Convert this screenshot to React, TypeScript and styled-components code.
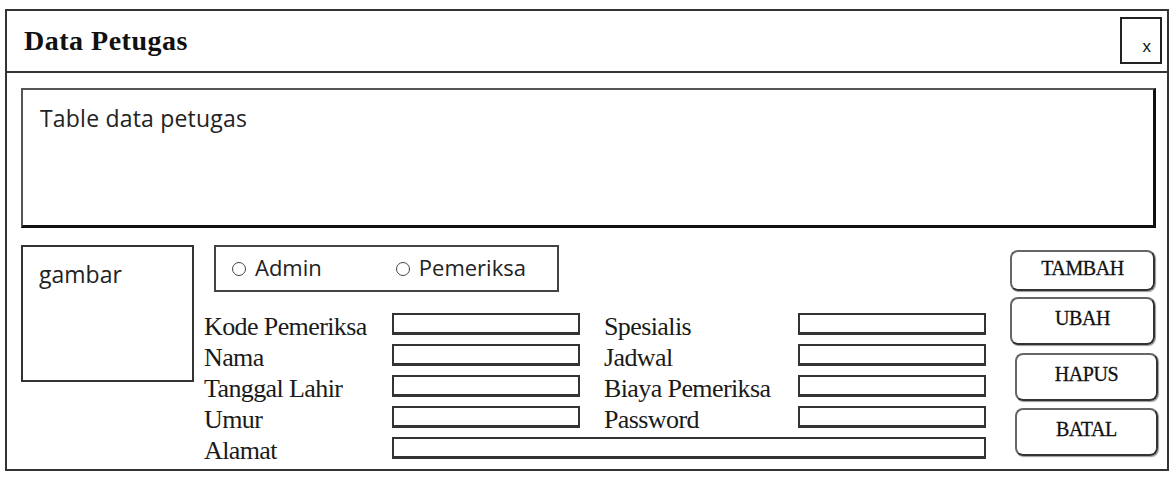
import { Fragment } from 'react';
import styled, { createGlobalStyle } from 'styled-components';

const GlobalStyle = createGlobalStyle`
    html, body {
        margin : 0;
        padding : 0;
        background-color : #ffffff;
    }
    body {
        font-family : "Liberation Serif", "Times New Roman", serif;
        color : #111;
    }
`;

const Frame = styled.div`
    margin : 9px 0 0 5px;
    width : 1164px;
    height : 462px;
    box-sizing : border-box;
    border : 2px solid #333;
    display : flex;
    flex-direction : column;
`;

const Header = styled.div`
    height : 62px;
    flex-shrink : 0;
    box-sizing : border-box;
    border-bottom : 2px solid #333;
    display : flex;
    justify-content : space-between;
    padding : 0 5px 0 17px;
`;

const Title = styled.h1`
    margin : 0;
    align-self : center;
    font-family : "Liberation Serif", serif;
    font-weight : bold;
    font-size : 28px;
    letter-spacing : 0.5px;
    color : #111;
`;

const CloseBox = styled.div`
    margin-top : 6px;
    width : 42px;
    height : 47px;
    box-sizing : border-box;
    border : 2px solid #222;
    display : flex;
    align-items : flex-end;
    justify-content : flex-end;
    padding : 0 9px 7px 0;
    font-family : "Liberation Sans", Arial, sans-serif;
    font-size : 17px;
    line-height : 1;
`;

const Body = styled.div`
    flex : 1;
    padding : 15px 11px 0 14px;
    display : flex;
    flex-direction : column;
    gap : 17px;
`;

const TableBox = styled.div`
    height : 140px;
    box-sizing : border-box;
    border : 2px solid #555;
    border-right : 3px solid #111;
    border-bottom : 3px solid #111;
    padding : 12px 0 0 17px;
    font-family : "Open Sans", "Noto Sans", sans-serif;
    font-size : 23px;
    letter-spacing : 0.2px;
    color : #222;
`;

const Bottom = styled.div`
    display : flex;
    align-items : flex-start;
`;

const ImageBox = styled.div`
    width : 173px;
    height : 137px;
    box-sizing : border-box;
    border : 2px solid #333;
    padding : 11px 0 0 16px;
    font-family : "Open Sans", "Noto Sans", sans-serif;
    font-size : 23px;
    color : #222;
`;

const FormArea = styled.div`
    margin-left : 10px;
    display : flex;
    flex-direction : column;
    gap : 16px;
`;

const RadioGroup = styled.div`
    margin-left : 10px;
    width : 345px;
    height : 47px;
    box-sizing : border-box;
    border : 2px solid #444;
    display : flex;
    align-items : center;
    padding : 0 0 3px 16px;
    gap : 74px;
    font-family : "Open Sans", "Noto Sans", sans-serif;
    font-size : 22px;
    color : #222;
`;

const RadioItem = styled.label`
    display : flex;
    align-items : center;
    gap : 9px;
`;

const RadioDot = styled.span`
    width : 14px;
    height : 14px;
    box-sizing : border-box;
    border : 1.5px solid #444;
    border-radius : 50%;
    margin-top : 4px;
`;

const FieldGrid = styled.div`
    display : grid;
    grid-template-columns : 188px 188px 24px 194px 188px;
    grid-auto-rows : 31px;
    align-items : center;
`;

const Label = styled.span<{ $col : number }>`
    grid-column : ${p => p.$col};
    font-family : "Liberation Serif", "Times New Roman", serif;
    font-size : 26px;
    letter-spacing : -0.6px;
    line-height : 31px;
    padding-top : 5px;
    color : #1a1a1a;
    white-space : nowrap;
`;

const Field = styled.div<{ $col : number; $span ?: number }>`
    grid-column : ${p => p.$col} / span ${p => p.$span ?? 1};
    height : 22px;
    box-sizing : border-box;
    border : 2px solid #333;
    border-bottom-width : 3px;
    background : #fff;
`;

const ButtonColumn = styled.div`
    margin-left : auto;
    margin-right : -2px;
    margin-top : 5px;
    display : flex;
    flex-direction : column;
    align-items : flex-end;
`;

const ActionButton = styled.div<{ $width : number; $height : number; $top : number; $right : number }>`
    width : ${p => p.$width}px;
    height : ${p => p.$height}px;
    margin-top : ${p => p.$top}px;
    margin-right : ${p => p.$right}px;
    box-sizing : border-box;
    border : 2px solid #666;
    border-right-color : #333;
    border-bottom-color : #333;
    border-radius : 8px;
    box-shadow : 1px 1px 1px #999;
    display : flex;
    align-items : center;
    justify-content : center;
    padding-bottom : 5px;
    font-family : "Liberation Serif", "Times New Roman", serif;
    font-size : 20px;
    letter-spacing : -0.4px;
    -webkit-text-stroke : 0.3px #111;
    color : #111;
`;

const leftFields = ['Kode Pemeriksa', 'Nama', 'Tanggal Lahir', 'Umur'];
const rightFields = ['Spesialis', 'Jadwal', 'Biaya Pemeriksa', 'Password'];
const buttons = [
    { text : 'TAMBAH', width : 145, height : 41, top : 0, right : 3 },
    { text : 'UBAH', width : 145, height : 48, top : 6, right : 3 },
    { text : 'HAPUS', width : 143, height : 48, top : 8, right : 0 },
    { text : 'BATAL', width : 143, height : 48, top : 7, right : 0 },
];

const App = () => {
    return (
        <>
            <GlobalStyle />
            <Frame>
                <Header>
                    <Title>Data Petugas</Title>
                    <CloseBox>x</CloseBox>
                </Header>
                <Body>
                    <TableBox>Table data petugas</TableBox>
                    <Bottom>
                        <ImageBox>gambar</ImageBox>
                        <FormArea>
                            <RadioGroup>
                                <RadioItem><RadioDot />Admin</RadioItem>
                                <RadioItem><RadioDot />Pemeriksa</RadioItem>
                            </RadioGroup>
                            <FieldGrid>
                                {leftFields.map((name, i) => (
                                    <Fragment key={name}>
                                        <Label $col={1}>{name}</Label>
                                        <Field $col={2} />
                                        <Label $col={4}>{rightFields[i]}</Label>
                                        <Field $col={5} />
                                    </Fragment>
                                ))}
                                <Label $col={1}>Alamat</Label>
                                <Field $col={2} $span={4} />
                            </FieldGrid>
                        </FormArea>
                        <ButtonColumn>
                            {buttons.map(b => (
                                <ActionButton key={b.text} $width={b.width} $height={b.height} $top={b.top} $right={b.right}>
                                    {b.text}
                                </ActionButton>
                            ))}
                        </ButtonColumn>
                    </Bottom>
                </Body>
            </Frame>
        </>
    );
};

export default App;
